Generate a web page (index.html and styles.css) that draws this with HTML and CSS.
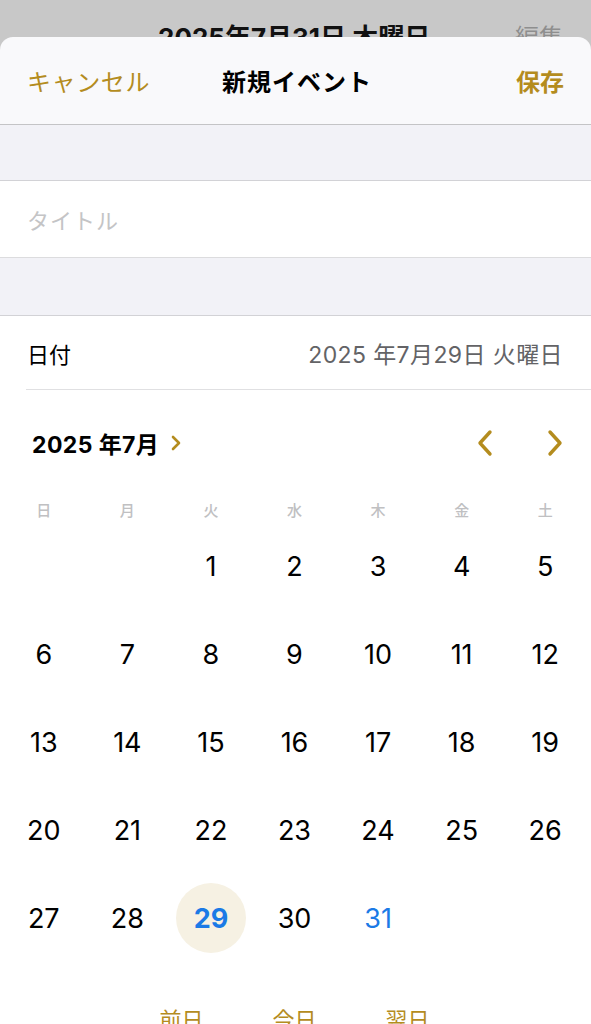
FILE: index.html
```
<!DOCTYPE html>
<html lang="ja">
<head>
<meta charset="utf-8">
<link rel="stylesheet" href="styles.css">
</head>
<body>
<div class="behind">
  <div class="behind-title">2025年7月31日 木曜日</div>
  <div class="behind-edit">編集</div>
</div>
<div class="sheet">
  <div class="nav">
    <span class="nav-cancel">キャンセル</span>
    <span class="nav-title">新規イベント</span>
    <span class="nav-save">保存</span>
  </div>
  <div class="gap gap1"></div>
  <div class="row title-row"><span class="placeholder">タイトル</span></div>
  <div class="gap gap2"></div>
  <div class="panel">
    <div class="date-row">
      <span class="date-label">日付</span>
      <span class="date-value">2025 年7月29日 火曜日</span>
    </div>
    <div class="cal-head">
      <div class="month">2025 年7月
        <svg class="month-chev" width="12" height="18" viewBox="0 0 12 18"><path d="M3 3 L9 9 L3 15" fill="none" stroke="#b48c1e" stroke-width="2.6" stroke-linecap="round" stroke-linejoin="round"/></svg>
      </div>
      <div class="arrows">
        <svg width="18" height="28" viewBox="0 0 18 28"><path d="M14 3 L4 14 L14 25" fill="none" stroke="#b48c1e" stroke-width="3.4" stroke-linecap="round" stroke-linejoin="round"/></svg>
        <svg width="18" height="28" viewBox="0 0 18 28"><path d="M4 3 L14 14 L4 25" fill="none" stroke="#b48c1e" stroke-width="3.4" stroke-linecap="round" stroke-linejoin="round"/></svg>
      </div>
    </div>
    <div class="weekdays">
      <span>日</span><span>月</span><span>火</span><span>水</span><span>木</span><span>金</span><span>土</span>
    </div>
    <div class="days">
      <span></span><span></span><span>1</span><span>2</span><span>3</span><span>4</span><span>5</span>
      <span>6</span><span>7</span><span>8</span><span>9</span><span>10</span><span>11</span><span>12</span>
      <span>13</span><span>14</span><span>15</span><span>16</span><span>17</span><span>18</span><span>19</span>
      <span>20</span><span>21</span><span>22</span><span>23</span><span>24</span><span>25</span><span>26</span>
      <span>27</span><span>28</span><span class="sel"><b>29</b></span><span>30</span><span class="today">31</span><span></span><span></span>
    </div>
    <div class="quick">
      <span>前日</span><span>今日</span><span>翌日</span>
    </div>
  </div>
</div>
</body>
</html>
```
FILE: styles.css
```
html, body {
  margin: 0;
  padding: 0;
}
body {
  width: 591px;
  height: 1024px;
  overflow: hidden;
  background: #c8c8c8;
  font-family: "Inter", "Noto Sans CJK JP", sans-serif;
  color: #000;
}
.behind {
  height: 37px;
  overflow: hidden;
  display: flex;
}
.behind-title {
  margin-left: 158px;
  margin-top: 22px;
  font-size: 26px;
  font-weight: 700;
  line-height: 32px;
  color: #111;
}
.behind-edit {
  margin-left: auto;
  margin-right: 28px;
  margin-top: 22px;
  font-size: 24px;
  line-height: 32px;
  color: #8e8e8e;
}
.sheet {
  background: #f9f9fb;
  border-radius: 13px 13px 0 0;
  overflow: hidden;
  height: 987px;
}
.nav {
  height: 87px;
  display: flex;
  align-items: center;
  padding: 0 27px;
  border-bottom: 1px solid #c4c4c6;
  font-size: 24px;
}
.nav-cancel {
  color: #b48c1e;
  letter-spacing: 0.6px;
}
.nav-title {
  font-weight: 700;
  margin-left: 72px;
  letter-spacing: 1px;
}
.nav-save {
  margin-left: auto;
  color: #b48c1e;
  font-weight: 700;
}
.gap {
  background: #f2f2f7;
  border-bottom: 1px solid #d2d2d6;
}
.gap1 { height: 55px; }
.gap2 { height: 57px; }
.row {
  background: #fff;
  border-bottom: 1px solid #dcdcde;
  display: flex;
  align-items: center;
  padding-left: 27px;
}
.title-row { height: 76px; }
.placeholder {
  color: #c4c4c6;
  font-size: 22px;
  letter-spacing: 1px;
}
.panel {
  background: #fff;
  height: 800px;
}
.date-row {
  height: 73px;
  margin-left: 26px;
  padding-right: 28px;
  display: flex;
  align-items: center;
  justify-content: space-between;
  border-bottom: 1px solid #e0e0e2;
}
.date-label {
  font-size: 22px;
  padding-left: 1px;
}
.date-value {
  font-size: 23px;
  color: #636366;
  letter-spacing: 0.4px;
}
.cal-head {
  height: 106px;
  display: flex;
  align-items: center;
  padding-left: 32px;
  padding-right: 27px;
}
.month {
  font-size: 23px;
  font-weight: 700;
  display: flex;
  align-items: center;
  gap: 11px;
  letter-spacing: 0.4px;
}
.arrows {
  margin-left: auto;
  display: flex;
  gap: 52px;
  align-items: center;
}
.weekdays, .days {
  display: grid;
  grid-template-columns: repeat(7, 1fr);
  padding: 0 4px 0 2px;
}
.weekdays {
  height: 26px;
  align-items: center;
}
.weekdays span {
  text-align: center;
  font-size: 15px;
  color: #c0c0c2;
  font-weight: 500;
}
.days span {
  height: 88px;
  display: flex;
  align-items: center;
  justify-content: center;
  font-size: 27px;
}
.days .sel b {
  width: 70px;
  height: 70px;
  border-radius: 50%;
  background: #f6f1e3;
  color: #1b7ae6;
  font-weight: 700;
  display: flex;
  align-items: center;
  justify-content: center;
}
.days .today {
  color: #1b7ae6;
}
.quick {
  display: flex;
  justify-content: center;
  gap: 69px;
  padding-top: 40px;
  margin-right: 2px;
}
.quick span {
  color: #b48c1e;
  font-size: 22px;
}
```
